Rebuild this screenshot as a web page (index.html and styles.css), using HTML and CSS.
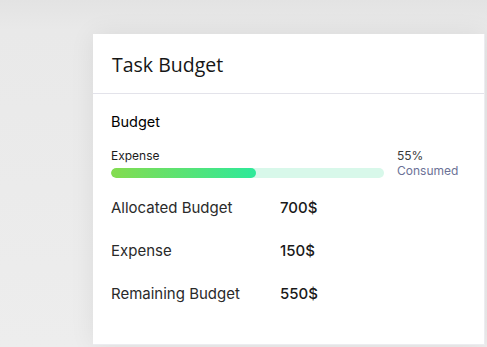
FILE: index.html
```html
<!DOCTYPE html>
<html lang="en">
<head>
	<meta charset="UTF-8">
	<title>Task Budget</title>
	<link rel="stylesheet" href="styles.css">
</head>
<body>
	<div class="stage">
		<div class="card">
			<div class="card_head">Task Budget</div>
			<div class="card_body">
				<div class="section_title">Budget</div>
				<div class="progress">
					<div class="progress_main">
						<div class="progress_label">Expense</div>
						<div class="track">
							<div class="fill" style="width: 53%"></div>
						</div>
					</div>
					<div class="progress_side">
						<div class="pct">55%</div>
						<div class="consumed">Consumed</div>
					</div>
				</div>
				<ul class="rows">
					<li><span class="key">Allocated Budget</span><span class="val">700$</span></li>
					<li><span class="key">Expense</span><span class="val">150$</span></li>
					<li><span class="key">Remaining Budget</span><span class="val">550$</span></li>
				</ul>
			</div>
		</div>
	</div>
</body>
</html>
```

FILE: styles.css
```css
*{
	margin: 0;
	padding: 0;
	box-sizing: border-box;
}
body {
	width: 487px;
	height: 347px;
	overflow: hidden;
	background-color: #ececec;
	font-family: Inter, "Liberation Sans", sans-serif;
	color: #1c1c1c;
}
li {
	list-style: none;
}
.stage {
	height: 347px;
	padding: 34px 2px 2px 93px;
	background: linear-gradient(180deg, #e3e3e3 0, #e9e9e9 30px, #ededed 100%);
}
.card {
	height: 311px;
	background-color: #fff;
	box-shadow: 0 0 24px rgba(0,0,0,0.07);
	border-right: 1px solid #ececf0;
	border-bottom: 1px solid #ececf0;
}
.card_head {
	height: 60px;
	padding: 17px 0 0 19px;
	font-family: "Open Sans", sans-serif;
	font-size: 19.5px;
	color: #161616;
	border-bottom: 1px solid #e3e3ea;
}
.card_body {
	padding: 19px 0 0 18px;
}
.section_title {
	font-size: 14.5px;
	font-weight: 400;
	color: #000;
}
.progress {
	display: flex;
	margin-top: 19px;
}
.progress_main {
	width: 273px;
}
.progress_label {
	font-size: 12px;
	line-height: 14px;
}
.track {
	height: 10px;
	margin-top: 5px;
	border-radius: 5px;
	background-color: #d8f8ea;
	overflow: hidden;
}
.fill {
	height: 100%;
	border-radius: 5px;
	background: linear-gradient(90deg, #84dc4f, #2ee99a);
}
.progress_side {
	margin-top: -1px;
	margin-left: 13px;
	font-size: 12px;
	line-height: 15px;
}
.pct {
	color: #3a3a3a;
}
.consumed {
	color: #6b7196;
}
.rows {
	margin-top: 20px;
}
.rows li {
	display: flex;
	height: 43px;
	font-size: 15px;
	line-height: 20px;
}
.rows .key {
	width: 169px;
	color: #2a2a2a;
}
.rows .val {
	font-weight: 500;
	color: #1a1a1a;
}
```
